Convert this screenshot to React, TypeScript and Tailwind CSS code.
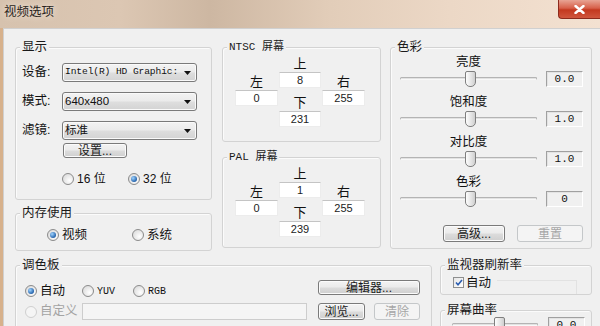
import type { ReactNode } from 'react';

function cn(...parts: (string | false | undefined)[]) {
  return parts.filter(Boolean).join(' ');
}

const MONO = "font-['Liberation_Mono','Noto_Sans_CJK_SC',monospace]";

function Group({ label, className, children, mono }: { label: string; className?: string; children?: ReactNode; mono?: boolean }) {
  return (
    <div className={cn('relative shrink-0 rounded-[3px] border border-[#d3d3d3] shadow-[inset_1px_1px_0_#fbfbfb]', className)}>
      <span
        className={cn(
          'absolute left-[4px] top-[-9px] bg-[#f0f0f0] px-[2px] leading-[16px] text-[#1a1a1a]',
          mono ? cn(MONO, 'text-[11px]') : 'text-[12.5px]',
        )}
      >
        {label}
      </span>
      {children}
    </div>
  );
}

function Button({ children, className, disabled }: { children: ReactNode; className?: string; disabled?: boolean }) {
  return (
    <button
      type="button"
      className={cn(
        'grid shrink-0 place-items-center rounded-[3px] border text-[12px] leading-none',
        disabled
          ? 'border-[#c4c7c9] bg-[#f4f4f4] text-[#a6a6a6]'
          : 'border-[#7a7a7a] bg-[linear-gradient(#f3f3f3_0%,#ebebeb_48%,#dcdcdc_52%,#cfcfcf_100%)] text-[#1a1a1a] shadow-[inset_0_0_0_1px_#fbfbfb]',
        className,
      )}
    >
      {children}
    </button>
  );
}

function Select({ value, mono }: { value: string; mono?: boolean }) {
  return (
    <div className="flex h-[19px] w-[135px] items-center rounded-[3px] border border-[#7a7a7a] bg-[linear-gradient(#f3f3f3_0%,#ebebeb_48%,#dedede_52%,#d3d3d3_100%)] pl-[2px] pr-[5px] shadow-[inset_0_0_0_1px_#fafafa]">
      <span
        className={cn(
          'flex-1 overflow-hidden whitespace-nowrap text-[#111]',
          mono ? cn(MONO, 'text-[9.6px] tracking-[-0.1px]') : 'text-[11.5px]',
        )}
      >
        {value}
      </span>
      <svg width="7" height="4" viewBox="0 0 7 4" className="ml-[2px] shrink-0">
        <path d="M0 0h7L3.5 4z" fill="#111" />
      </svg>
    </div>
  );
}

function Radio({ checked, disabled }: { checked?: boolean; disabled?: boolean }) {
  return (
    <span
      className={cn(
        'grid h-[12px] w-[12px] shrink-0 place-items-center rounded-full border',
        disabled
          ? 'border-[#cfcfcf] bg-[#f5f5f5]'
          : 'border-[#8b8b8b] bg-[radial-gradient(circle_at_65%_65%,#ffffff,#d4d4d4)]',
      )}
    >
      {checked && (
        <span className="h-[6px] w-[6px] rounded-full bg-[radial-gradient(circle_at_35%_35%,#9fd4ff,#1c5ba6_75%)]" />
      )}
    </span>
  );
}

function Field({ value }: { value: string }) {
  return (
    <div className="grid h-[16px] place-items-center border border-[#ececec] border-t-[#c4c4c4] bg-white text-[11px] leading-none text-[#222]">
      {value}
    </div>
  );
}

function Side({ label }: { label: string }) {
  return <div className="h-[16px] text-center text-[13px] leading-[16px] text-[#111]">{label}</div>;
}

function Offsets({ top, left, right, bottom }: { top: string; left: string; right: string; bottom: string }) {
  return (
    <div className="flex pl-[12px]">
      <div className="w-[43px] pt-[26px]">
        <Side label="左" />
        <Field value={left} />
      </div>
      <div className="ml-[1px] w-[42px] pt-[8px]">
        <Side label="上" />
        <Field value={top} />
        <div className="mt-[7px]">
          <Side label="下" />
        </div>
        <Field value={bottom} />
      </div>
      <div className="ml-[1px] w-[43px] pt-[26px]">
        <Side label="右" />
        <Field value={right} />
      </div>
    </div>
  );
}

function ValueBox({ value, className }: { value: string; className?: string }) {
  return (
    <div
      className={cn(
        'grid h-[16px] w-[37px] shrink-0 place-items-center border border-[#a0a0a0] border-b-[#ffffff] border-r-[#ffffff] bg-[#f0f0f0] text-[11px] leading-none text-[#111] shadow-[inset_1px_1px_0_#e3e3e3]',
        MONO,
        className,
      )}
    >
      {value}
    </div>
  );
}

function Track({ width, thumb }: { width: number; thumb: number }) {
  return (
    <div className="relative h-[16px] shrink-0" style={{ width }}>
      <div className="absolute left-0 right-0 top-[6px] h-[3px] rounded-full border border-[#b4b4b4] border-b-[#f8f8f8] bg-[#e2e2e2]" />
      <div
        className="absolute top-0 h-[16px] w-[11px] rounded-t-[2px] rounded-b-[5px] border border-[#7f7f7f] bg-[linear-gradient(90deg,#fdfdfd,#e3e3e3_60%,#cfcfcf)]"
        style={{ left: thumb }}
      />
    </div>
  );
}

function SliderRow({ label, value, first }: { label: string; value: string; first?: boolean }) {
  return (
    <div className={first ? '' : 'mt-[7px]'}>
      <div className="w-[137px] text-center text-[12.5px] leading-[16px] text-[#111]">{label}</div>
      <div className="mt-[1px] flex items-center">
        <Track width={137} thumb={65} />
        <ValueBox value={value} className="ml-[9px]" />
      </div>
    </div>
  );
}

function TitleBar() {
  return (
    <div className="flex h-[28px] shrink-0 bg-[linear-gradient(90deg,#d6c2ae_0%,#dcc7b3_20%,#cdb7a2_35%,#e2cdb9_55%,#ecd8c6_75%,#f3e1d1_100%)]">
      <span className="pl-[4px] pt-[4px] text-[12.5px] leading-[17px] text-[#2a2420] [text-shadow:0_0_6px_#f6ece2]">
        视频选项
      </span>
      <div className="ml-auto grid h-[19px] w-[42px] place-items-center rounded-bl-[4px] border border-t-0 border-r-0 border-[#8c2a1c] bg-[linear-gradient(#e8a494_0%,#d7604a_45%,#c3381f_55%,#d0563d_100%)]">
        <svg width="11" height="9" viewBox="0 0 11 9">
          <path d="M1.5 1l8 7M9.5 1l-8 7" stroke="#fff" strokeWidth="2.4" strokeLinecap="round" />
        </svg>
      </div>
    </div>
  );
}

export default function App() {
  return (
    <div className="flex h-[326px] w-[600px] flex-col overflow-hidden bg-[#f0f0f0] font-['Liberation_Sans','Noto_Sans_CJK_SC',sans-serif] text-[#111]">
      <TitleBar />
      <div className="flex-1 border-l-[3px] border-[#d7b18c]">
        <div className="h-full border-l border-t border-[#d0d0d0] pl-[11px] pt-[18px]">
          {/* top row */}
          <div className="flex items-start">
            <div className="flex w-[197px] flex-col">
              <Group label="显示" className="h-[153px]">
                <div className="pl-[6px] pt-[15px]">
                  {[
                    ['设备:', 'Intel(R) HD Graphic:', true],
                    ['模式:', '640x480', false],
                    ['滤镜:', '标准', false],
                  ].map(([label, value, mono], i) => (
                    <div key={i} className={cn('flex items-center', i > 0 && 'mt-[10px]')}>
                      <span className="w-[40px] text-[12.5px] leading-none">{label as string}</span>
                      <Select value={value as string} mono={mono as boolean} />
                    </div>
                  ))}
                  <Button className="ml-[41px] mt-[3px] h-[15px] w-[64px]">设置...</Button>
                  <div className="ml-[40px] mt-[14px] flex h-[14px] items-center text-[12px]">
                    <div className="flex w-[66px] items-center gap-[3px]">
                      <Radio />
                      <span>16 位</span>
                    </div>
                    <div className="flex items-center gap-[3px]">
                      <Radio checked />
                      <span>32 位</span>
                    </div>
                  </div>
                </div>
              </Group>
              <Group label="内存使用" className="mt-[13px] h-[38px]">
                <div className="mt-[14px] flex h-[14px] items-center pl-[31px] text-[12.5px]">
                  <div className="flex w-[85px] items-center gap-[3px]">
                    <Radio checked />
                    <span>视频</span>
                  </div>
                  <div className="flex items-center gap-[3px]">
                    <Radio />
                    <span>系统</span>
                  </div>
                </div>
              </Group>
            </div>

            <div className="ml-[10px] flex w-[159px] flex-col">
              <Group label="NTSC 屏幕" mono className="h-[95px]">
                <Offsets top="8" left="0" right="255" bottom="231" />
              </Group>
              <Group label="PAL 屏幕" mono className="mt-[15px] h-[91px]">
                <Offsets top="1" left="0" right="255" bottom="239" />
              </Group>
            </div>

            <Group label="色彩" className="ml-[9px] h-[202px] w-[202px]">
              <div className="pl-[9px] pt-[6px]">
                <SliderRow label="亮度" value="0.0" first />
                <SliderRow label="饱和度" value="1.0" />
                <SliderRow label="对比度" value="1.0" />
                <SliderRow label="色彩" value="0" />
              </div>
              <div className="mt-[18px] flex justify-end gap-[12px] pr-[8px]">
                <Button className="h-[17px] w-[62px]">高级...</Button>
                <Button disabled className="h-[17px] w-[66px]">
                  重置
                </Button>
              </div>
            </Group>
          </div>

          {/* bottom row */}
          <div className="mt-[14px] flex items-start">
            <Group label="调色板" className="h-[80px] w-[417px]">
              <div className="pl-[9px] pr-[11px] pt-[14px]">
                <div className="flex items-start">
                  <div className="mt-[4px] flex h-[14px] items-center text-[12.5px]">
                    <div className="flex w-[57px] items-center gap-[3px]">
                      <Radio checked />
                      <span>自动</span>
                    </div>
                    <div className="flex w-[51px] items-center gap-[3px]">
                      <Radio />
                      <span className={cn(MONO, 'text-[10px]')}>YUV</span>
                    </div>
                    <div className="flex items-center gap-[3px]">
                      <Radio />
                      <span className={cn(MONO, 'text-[10px]')}>RGB</span>
                    </div>
                  </div>
                  <Button className="ml-auto h-[15px] w-[102px]">编辑器...</Button>
                </div>
                <div className="mt-[5px] flex h-[17px] items-center">
                  <div className="flex w-[57px] items-center gap-[3px] text-[12.5px] text-[#a3a3a3]">
                    <Radio disabled />
                    <span>自定义</span>
                  </div>
                  <div className="h-[17px] w-[225px] border border-[#cdcdcd] bg-[#f5f5f5]" />
                  <Button className="ml-auto h-[17px] w-[47px]">浏览...</Button>
                  <Button disabled className="ml-[9px] h-[17px] w-[46px]">
                    清除
                  </Button>
                </div>
              </div>
            </Group>

            <div className="ml-[8px] flex w-[152px] flex-col">
              <Group label="监视器刷新率" className="h-[30px]">
                <div className="flex items-start pl-[12px] pt-[11px]">
                  <span className="grid h-[11px] w-[11px] shrink-0 place-items-center border border-[#8e8f8f] bg-[linear-gradient(135deg,#e6e6e6,#ffffff)]">
                    <svg width="8" height="7" viewBox="0 0 8 7">
                      <path d="M1 3.5l2 2.2L7 1" fill="none" stroke="#2a5db0" strokeWidth="1.6" />
                    </svg>
                  </span>
                  <span className="ml-[2px] text-[12.5px] leading-[12px]">自动</span>
                  <div className="ml-[6px] mt-[3px] h-[14px] w-[80px] border-r border-t border-[#e2e2e2]" />
                </div>
              </Group>
              <Group label="屏幕曲率" className="mt-[15px] h-[40px]">
                <div className="flex items-center pl-[11px] pt-[6px]">
                  <Track width={86} thumb={42} />
                  <ValueBox value="0.0" className="ml-[10px] w-[35px]" />
                </div>
              </Group>
            </div>
          </div>
        </div>
      </div>
    </div>
  );
}
